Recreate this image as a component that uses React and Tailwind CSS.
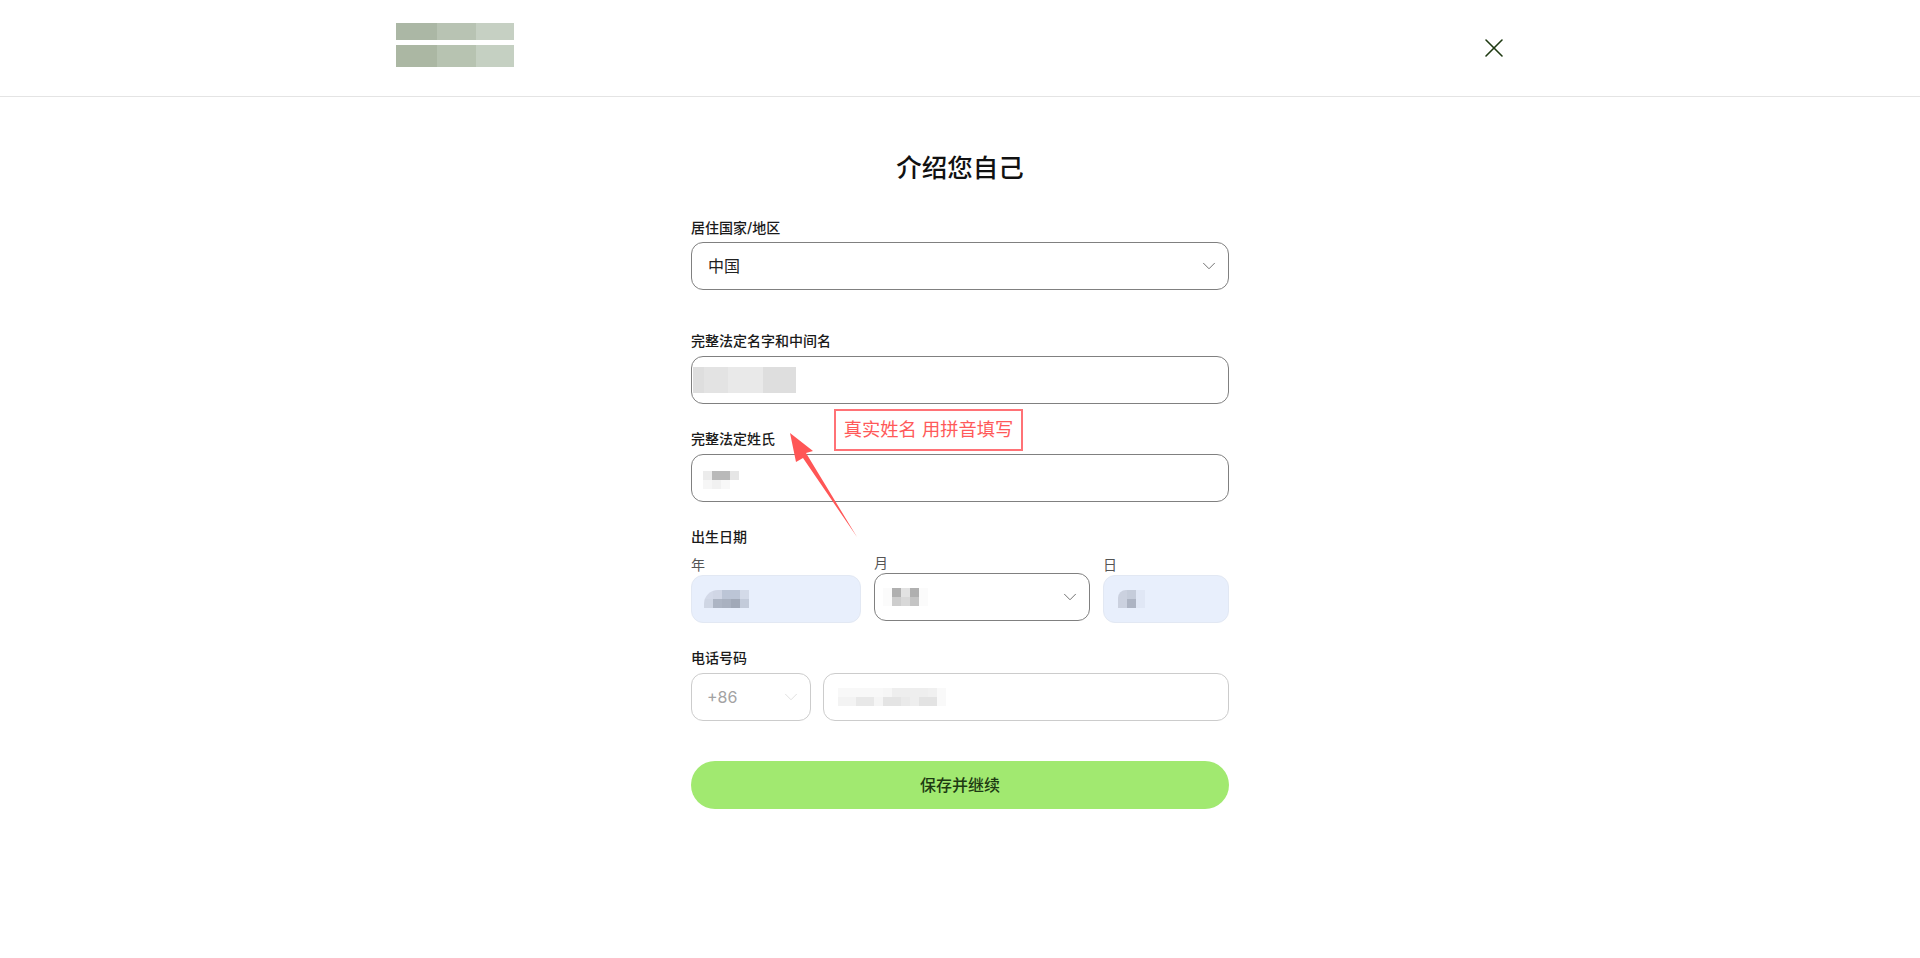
import { ChevronDown, X } from 'lucide-react'

const fontStack = 'font-["Inter","Noto_Sans_CJK_SC",sans-serif]'

// pixelated patches that hide the personal data in the form
const lastName = [
    ['#ececec', '#b9b9b9', '#b9b9b9', '#e6e6e6'],
    ['#f6f6f6', '#f1f1f1', '#f8f8f8', '#ffffff'],
]
const yearCells = [
    ['#d3d9e8', '#d0d6e5', '#bcc5d6', '#bcc5d6', '#d3dae8'],
    ['#cfd6e4', '#adb5c4', '#a9b1c0', '#a1a9b8', '#c3cbda'],
]
const monthCells = [
    ['#fbfbfb', '#b0b0b0', '#e2e2e2', '#b0b0b0', '#fbfbfb'],
    ['#fbfbfb', '#cdcdcd', '#d8d8d8', '#c4c4c4', '#fbfbfb'],
]
const dayCells = [
    ['#cbd1df', '#c5ccda', '#e0e7f5'],
    ['#cbd1df', '#adb4c3', '#e0e7f5'],
]
const phoneCells = [
    ['#f8f8f8', '#f8f8f8', '#f8f8f8', '#f8f8f8', '#f8f8f8', '#f6f6f6', '#eeeeee', '#eeeeee', '#eeeeee', '#eeeeee', '#f0f0f0', '#f9f9f9'],
    ['#f3f3f3', '#f3f3f3', '#e8e8e8', '#e8e8e8', '#f5f5f5', '#e4e4e4', '#e4e4e4', '#eaeaea', '#eeeeee', '#e3e3e3', '#e3e3e3', '#f9f9f9'],
]

function Mosaic({ rows, className = '' }) {
    return (
        <div className={`flex flex-col overflow-hidden ${className}`}>
            {rows.map((row, i) => (
                <div key={i} className="flex">
                    {row.map((color, j) => (
                        <div key={j} className="w-[9px] h-[9px]" style={{ backgroundColor: color }} />
                    ))}
                </div>
            ))}
        </div>
    )
}

function Label({ children, className = '' }) {
    return <div className={`h-5 leading-5 text-sm font-medium text-[#1a1a1a] ${className}`}>{children}</div>
}

function SubLabel({ children }) {
    return <div className="h-5 leading-5 text-sm text-[#555555]">{children}</div>
}

export default function App() {
    return (
        <div className={`min-h-[958px] bg-white ${fontStack}`}>
            {/* Header */}
            <header className="h-[97px] border-b border-[#e4e4e4] flex justify-center">
                <div className="w-[1128px] flex items-start justify-between">
                    <div className="mt-[23px] w-[118px] flex flex-col gap-[5px]">
                        <div className="flex h-[17px]">
                            <div className="w-[41px] bg-[#abb7a5]" />
                            <div className="w-[39px] bg-[#b8c3b3]" />
                            <div className="w-[38px] bg-[#c6d0c3]" />
                        </div>
                        <div className="flex h-[22px]">
                            <div className="w-[41px] bg-[#abb7a3]" />
                            <div className="w-[39px] bg-[#b7c3b1]" />
                            <div className="w-[38px] bg-[#c5d0c2]" />
                        </div>
                    </div>
                    <X size={32} strokeWidth={1.2} className="mt-8 mr-3.5 text-[#1f3a12]" />
                </div>
            </header>

            {/* Form */}
            <main className="flex justify-center">
                <div className="relative w-[538px] pt-[53px]">
                    <h1 className="h-9 leading-9 text-center text-[25.5px] font-medium text-[#111111]">介绍您自己</h1>

                    <Label className="mt-8">居住国家/地区</Label>
                    <div className="mt-1 h-12 pl-4 pr-2 flex items-center justify-between border border-[#808080] rounded-xl text-base text-[#222222]">
                        <span>中国</span>
                        <ChevronDown size={22} strokeWidth={1} className="text-[#666666]" />
                    </div>

                    <Label className="mt-[41px]">完整法定名字和中间名</Label>
                    <div className="mt-[5px] h-12 pl-px flex items-center border border-[#808080] rounded-xl">
                        <div className="flex h-[26px]">
                            <div className="w-[11px] bg-[#dedede]" />
                            <div className="w-[24px] bg-[#e3e3e3]" />
                            <div className="w-[35px] bg-[#e9e9e9]" />
                            <div className="w-[33px] bg-[#dedede]" />
                        </div>
                    </div>

                    <Label className="mt-[25px]">完整法定姓氏</Label>
                    <div className="mt-[5px] h-12 pl-[11px] flex items-center border border-[#808080] rounded-xl">
                        <Mosaic rows={lastName} className="mt-[3px]" />
                    </div>

                    <Label className="mt-[25px]">出生日期</Label>
                    <div className="mt-[5px] flex gap-[13px]">
                        <div className="w-[170px] pt-[3px]">
                            <SubLabel>年</SubLabel>
                            <div className="h-12 pl-3 flex items-center bg-[#e8effc] border border-[#e2e8f3] rounded-xl">
                                <Mosaic rows={yearCells} className="rounded-tl-[14px]" />
                            </div>
                        </div>
                        <div className="w-[216px] pt-px">
                            <SubLabel>月</SubLabel>
                            <div className="h-12 pl-2 pr-2 flex items-center justify-between border border-[#808080] rounded-xl">
                                <Mosaic rows={monthCells} />
                                <ChevronDown size={22} strokeWidth={1} className="text-[#666666]" />
                            </div>
                        </div>
                        <div className="w-[126px] pt-[3px]">
                            <SubLabel>日</SubLabel>
                            <div className="h-12 pl-3.5 flex items-center bg-[#e8effc] border border-[#e2e8f3] rounded-xl">
                                <Mosaic rows={dayCells} className="rounded-tl-[8px]" />
                            </div>
                        </div>
                    </div>

                    <Label className="mt-[25px]">电话号码</Label>
                    <div className="mt-[5px] flex gap-3">
                        <div className="w-[120px] h-12 pl-[15px] pr-2 flex items-center justify-between border border-[#cccccc] rounded-xl text-base text-[#a3a3a3]">
                            <span>+86</span>
                            <ChevronDown size={22} strokeWidth={1} className="text-[#dddddd]" />
                        </div>
                        <div className="flex-1 h-12 pl-3.5 flex items-center border border-[#cccccc] rounded-xl">
                            <Mosaic rows={phoneCells} />
                        </div>
                    </div>

                    <button className="mt-10 w-full h-12 rounded-full bg-[#a1e970] text-base font-medium text-[#1d3a12]">
                        保存并继续
                    </button>

                    {/* Red annotation over the form */}
                    <div className="absolute left-[143px] top-[312px] w-[189px] h-[42px] flex items-center justify-center border-2 border-[#ff7276] text-[18.3px] text-[#ff5a5a] whitespace-nowrap">
                        真实姓名 用拼音填写
                    </div>
                    <svg className="absolute left-[91px] top-[327px]" width="80" height="120" viewBox="0 0 80 120">
                        <path d="M8 9 L31 27 L24 29 L75 113 L21 34 L14 38 Z" fill="#ff5656" />
                    </svg>
                </div>
            </main>
        </div>
    )
}
